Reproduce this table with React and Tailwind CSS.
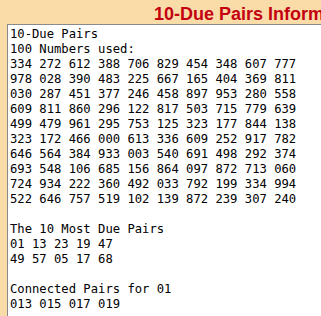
const rows = [
  "334 272 612 388 706 829 454 348 607 777",
  "978 028 390 483 225 667 165 404 369 811",
  "030 287 451 377 246 458 897 953 280 558",
  "609 811 860 296 122 817 503 715 779 639",
  "499 479 961 295 753 125 323 177 844 138",
  "323 172 466 000 613 336 609 252 917 782",
  "646 564 384 933 003 540 691 498 292 374",
  "693 548 106 685 156 864 097 872 713 060",
  "724 934 222 360 492 033 792 199 334 994",
  "522 646 757 519 102 139 872 239 307 240",
];

const report = [
  "10-Due Pairs",
  "100 Numbers used:",
  ...rows,
  "",
  "The 10 Most Due Pairs",
  "01 13 23 19 47",
  "49 57 05 17 68",
  "",
  "Connected Pairs for 01",
  "013 015 017 019",
].join("\n");

export default function App() {
  return (
    <div className="w-[321px] h-[316px] overflow-hidden bg-[#f9dca8]">
      <div className="h-[24px] pl-[154px] whitespace-nowrap font-['Liberation_Sans',Arial,sans-serif] font-bold text-[18px] leading-[29px] text-[#c40010]">
        10-Due Pairs Information
      </div>
      <div className="ml-[7px] h-[400px] w-[400px] bg-white border-t border-l border-[#8a8a8a] pt-[2px] pl-[2px]">
        <pre className="font-['DejaVu_Sans_Mono',monospace] text-[12.2px] leading-[15px] text-black">
          {report}
        </pre>
      </div>
    </div>
  );
}
